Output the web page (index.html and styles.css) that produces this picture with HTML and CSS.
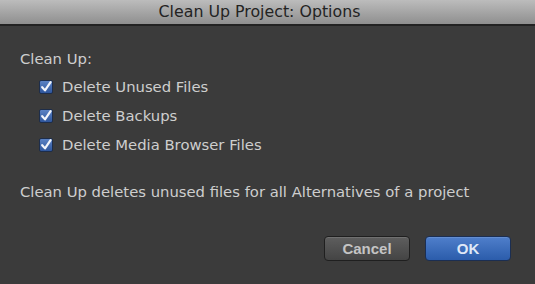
FILE: index.html
```html
<!DOCTYPE html>
<html lang="en">
<head>
    <meta charset="UTF-8">
    <title>Clean Up Project: Options</title>
    <link rel="stylesheet" href="styles.css">
</head>
<body>
    <div class="dialog">
        <div class="titlebar">Clean Up Project: Options</div>
        <div class="content">
            <div class="label">Clean Up:</div>
            <div class="options">
                <label class="option"><span class="check"><svg viewBox="0 0 14 14" width="14" height="14"><path d="M3.2 7.2 L6 10.4 L11.6 2.2" fill="none" stroke="#f2f4fa" stroke-width="2.2" stroke-linecap="round" stroke-linejoin="round"/></svg></span>Delete Unused Files</label>
                <label class="option"><span class="check"><svg viewBox="0 0 14 14" width="14" height="14"><path d="M3.2 7.2 L6 10.4 L11.6 2.2" fill="none" stroke="#f2f4fa" stroke-width="2.2" stroke-linecap="round" stroke-linejoin="round"/></svg></span>Delete Backups</label>
                <label class="option"><span class="check"><svg viewBox="0 0 14 14" width="14" height="14"><path d="M3.2 7.2 L6 10.4 L11.6 2.2" fill="none" stroke="#f2f4fa" stroke-width="2.2" stroke-linecap="round" stroke-linejoin="round"/></svg></span>Delete Media Browser Files</label>
            </div>
            <p class="note">Clean Up deletes unused files for all Alternatives of a project</p>
            <div class="buttons">
                <button class="btn">Cancel</button>
                <button class="btn primary">OK</button>
            </div>
        </div>
    </div>
</body>
</html>
```

FILE: styles.css
```css
* {
    box-sizing: border-box;
    margin: 0;
    padding: 0;
}

body {
    width: 535px;
    height: 284px;
    background: #3a3a3a;
    font-family: 'DejaVu Sans', Verdana, sans-serif;
    overflow: hidden;
}

.dialog {
    height: 284px;
    background: #3b3b3b;
}

.titlebar {
    height: 26px;
    padding-right: 16px;
    background: linear-gradient(#bcbcbc, #8f8f8f);
    border-bottom: 2px solid #222;
    color: #232323;
    font-size: 15.8px;
    line-height: 24px;
    text-align: center;
}

.content {
    padding: 24px 24px 0 20px;
    color: #cecece;
    font-size: 14.8px;
}

.label {
    line-height: 18px;
}

.options {
    display: flex;
    flex-direction: column;
    gap: 11px;
    padding: 10px 0 0 19px;
}

.option {
    display: flex;
    align-items: center;
    gap: 9px;
    line-height: 18px;
}

.check {
    width: 14px;
    height: 14px;
    border-radius: 2px;
    background: linear-gradient(#5b82c4, #2f569c);
    border: 1px solid #1d2d4a;
    display: flex;
}

.check svg {
    margin: -1px;
}

.note {
    margin-top: 29px;
    line-height: 18px;
}

.buttons {
    display: flex;
    justify-content: flex-end;
    gap: 15px;
    margin-top: 35px;
}

.btn {
    width: 86px;
    height: 25px;
    border-radius: 4px;
    border: 1px solid #1f1f1f;
    background: linear-gradient(#5e5e5e, #444);
    color: #c4c4c4;
    font-family: 'Liberation Sans', Arial, sans-serif;
    font-size: 15px;
    font-weight: bold;
    box-shadow: inset 0 1px 0 rgba(255,255,255,0.12);
}

.btn.primary {
    background: linear-gradient(#4f7fcb, #2b5cab);
    border-color: #1b2e52;
    color: #dfe8f7;
}
```
